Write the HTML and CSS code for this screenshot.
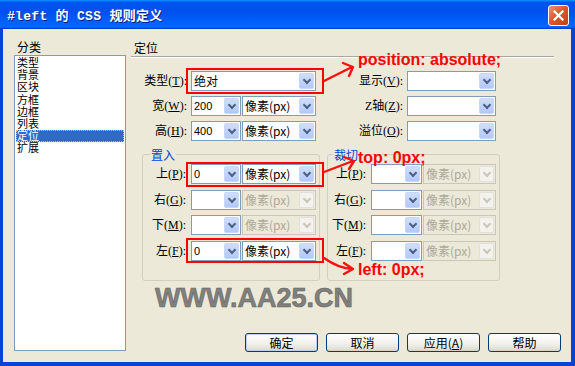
FILE: index.html
```html
<!DOCTYPE html>
<html lang="zh-CN">
<head>
    <meta charset="UTF-8">
    <meta name="viewport" content="width=device-width, initial-scale=1.0">
    <title>#left 的 CSS 规则定义</title>
    <link rel="stylesheet" href="styles.css">
</head>
<body>
<div class="window">
    <div class="titlebar">
        <span class="title">#left 的 CSS 规则定义</span>
        <button class="close-btn" title="关闭">
            <svg width="11" height="11" viewBox="0 0 11 11"><path d="M1.5 1.5 L9.5 9.5 M9.5 1.5 L1.5 9.5" stroke="#fff" stroke-width="2.2" stroke-linecap="square"/></svg>
        </button>
    </div>

    <div class="client">
        <div class="sidebar">
            <div class="caption">分类</div>
            <ul class="category-list">
                <li>类型</li>
                <li>背景</li>
                <li>区块</li>
                <li>方框</li>
                <li>边框</li>
                <li>列表</li>
                <li class="selected">定位</li>
                <li>扩展</li>
            </ul>
        </div>

        <div class="content">
            <div class="panel">
                <div class="panel-title">定位</div>

                <div class="top-fields">
                    <label class="field-label">类型(<u>T</u>):</label>
                    <div class="combo"><span class="combo-value">绝对</span><span class="combo-arrow"></span></div>
                    <label class="field-label">显示(<u>V</u>):</label>
                    <div class="combo"><span class="combo-value"></span><span class="combo-arrow"></span></div>

                    <label class="field-label">宽(<u>W</u>):</label>
                    <div class="pair">
                        <div class="combo num"><span class="combo-value number">200</span><span class="combo-arrow"></span></div>
                        <div class="combo unit"><span class="combo-value">像素(px)</span><span class="combo-arrow"></span></div>
                    </div>
                    <label class="field-label">Z轴(<u>Z</u>):</label>
                    <div class="combo"><span class="combo-value"></span><span class="combo-arrow"></span></div>

                    <label class="field-label">高(<u>H</u>):</label>
                    <div class="pair">
                        <div class="combo num"><span class="combo-value number">400</span><span class="combo-arrow"></span></div>
                        <div class="combo unit"><span class="combo-value">像素(px)</span><span class="combo-arrow"></span></div>
                    </div>
                    <label class="field-label">溢位(<u>O</u>):</label>
                    <div class="combo"><span class="combo-value"></span><span class="combo-arrow"></span></div>
                </div>

                <div class="groups">
                    <fieldset class="group placement">
                        <legend>置入</legend>
                        <div class="group-rows">
                            <label class="field-label">上(<u>P</u>):</label>
                            <div class="combo"><span class="combo-value number">0</span><span class="combo-arrow"></span></div>
                            <div class="combo"><span class="combo-value">像素(px)</span><span class="combo-arrow"></span></div>

                            <label class="field-label">右(<u>G</u>):</label>
                            <div class="combo"><span class="combo-value"></span><span class="combo-arrow"></span></div>
                            <div class="combo disabled"><span class="combo-value">像素(px)</span><span class="combo-arrow"></span></div>

                            <label class="field-label">下(<u>M</u>):</label>
                            <div class="combo"><span class="combo-value"></span><span class="combo-arrow"></span></div>
                            <div class="combo disabled"><span class="combo-value">像素(px)</span><span class="combo-arrow"></span></div>

                            <label class="field-label">左(<u>F</u>):</label>
                            <div class="combo"><span class="combo-value number">0</span><span class="combo-arrow"></span></div>
                            <div class="combo"><span class="combo-value">像素(px)</span><span class="combo-arrow"></span></div>
                        </div>
                    </fieldset>

                    <fieldset class="group clip">
                        <legend>裁切</legend>
                        <div class="group-rows">
                            <label class="field-label">上(<u>P</u>):</label>
                            <div class="combo"><span class="combo-value"></span><span class="combo-arrow"></span></div>
                            <div class="combo disabled"><span class="combo-value">像素(px)</span><span class="combo-arrow"></span></div>

                            <label class="field-label">右(<u>G</u>):</label>
                            <div class="combo"><span class="combo-value"></span><span class="combo-arrow"></span></div>
                            <div class="combo disabled"><span class="combo-value">像素(px)</span><span class="combo-arrow"></span></div>

                            <label class="field-label">下(<u>M</u>):</label>
                            <div class="combo"><span class="combo-value"></span><span class="combo-arrow"></span></div>
                            <div class="combo disabled"><span class="combo-value">像素(px)</span><span class="combo-arrow"></span></div>

                            <label class="field-label">左(<u>F</u>):</label>
                            <div class="combo"><span class="combo-value"></span><span class="combo-arrow"></span></div>
                            <div class="combo disabled"><span class="combo-value">像素(px)</span><span class="combo-arrow"></span></div>
                        </div>
                    </fieldset>
                </div>
            </div>

            <div class="footer">
                <button class="btn default">确定</button>
                <button class="btn">取消</button>
                <button class="btn">应用(<u>A</u>)</button>
                <button class="btn">帮助</button>
            </div>
        </div>
    </div>

    <!-- annotations drawn over the dialog -->
    <div class="annotations">
        <svg width="575" height="366" viewBox="0 0 575 366">
            <g fill="none" stroke="#ff0000" stroke-width="2">
                <rect x="187" y="69" width="136" height="24"/>
                <rect x="187" y="163" width="136" height="23"/>
                <rect x="187" y="239" width="136" height="23"/>
            </g>
            <g fill="none" stroke="#ff1010" stroke-width="2.4" stroke-linecap="round" stroke-linejoin="round">
                <path d="M324 81 L352 67 M343 63 L353 67 L349 76"/>
                <path d="M324 172 L353 161 M344 157 L354 161 L349 169"/>
                <path d="M324 258 Q338 268 352 269 M344 263 L353 269 L344 274"/>
            </g>
        </svg>
        <div class="note note-position">position: absolute;</div>
        <div class="note note-top">top: 0px;</div>
        <div class="note note-left">left: 0px;</div>
        <div class="watermark">WWW.AA25.CN</div>
    </div>
</div>
</body>
</html>
```

FILE: styles.css
```css
body {
    margin: 0;
    background: #fff;
}

.window {
    position: relative;
    width: 575px;
    height: 366px;
    box-sizing: border-box;
    display: flex;
    flex-direction: column;
    background: #0843d6;
    font-family: "Noto Sans CJK SC", "Noto Sans", sans-serif;
    font-size: 12px;
    color: #000;
    overflow: hidden;
}

/* title bar */
.titlebar {
    flex: none;
    height: 29px;
    display: flex;
    align-items: center;
    justify-content: space-between;
    padding: 0 6px 0 7px;
    background: linear-gradient(180deg, #0997ff, #0053ee 8%, #0050ee 40%, #0066ff 88%, #0066ff 93%, #005bff 95%, #003dd7 96%, #003dd7);
}
.title {
    color: #fff;
    font: bold 13px "Liberation Mono", "Noto Sans CJK SC", monospace;
    letter-spacing: 0.3px;
    text-shadow: 1px 1px 0 #0a1e8c;
    white-space: nowrap;
}
.close-btn {
    width: 21px;
    height: 21px;
    margin-top: 1px;
    padding: 0;
    display: flex;
    align-items: center;
    justify-content: center;
    border: 1px solid #fff;
    border-radius: 3px;
    background: linear-gradient(135deg, #f29273, #e0572f 45%, #c63d15);
}

/* client area */
.client {
    flex: 1;
    margin: 0 4px 4px 3px;
    padding: 10px 9px 10px 11px;
    display: flex;
    gap: 5px;
    background: #ece9d8;
    min-height: 0;
}

.sidebar {
    width: 112px;
    display: flex;
    flex-direction: column;
}
.caption {
    height: 16px;
    line-height: 16px;
    padding-left: 3px;
}
.category-list {
    flex: 1;
    margin: 0 0 1px;
    padding: 1px 0 0;
    list-style: none;
    background: #fff;
    border: 1px solid #7f9db9;
    font-family: "Liberation Serif", "Noto Sans CJK SC", serif;
    font-size: 11px;
}
.category-list li {
    height: 12.2px;
    line-height: 12.2px;
    margin: 0 1px;
    padding-left: 1px;
}
.category-list li.selected {
    background: #316ac5;
    color: #fff;
    outline: 1px dotted #e4c063;
    outline-offset: -1px;
}

.content {
    flex: 1;
    display: flex;
    flex-direction: column;
}
.panel {
    flex: 1;
    margin-right: 8px;
}
.panel-title {
    height: 17px;
    line-height: 17px;
    padding-left: 3px;
    border-bottom: 1px solid #aca899;
    box-shadow: 0 1px 0 #fff;
}

.top-fields {
    display: grid;
    grid-template-columns: 56px 125px 83px 89px;
    grid-auto-rows: 20px;
    column-gap: 4px;
    row-gap: 5px;
    margin-top: 14px;
}
.field-label {
    font-family: "Liberation Serif", "Noto Sans CJK SC", serif;
    text-align: right;
    line-height: 20px;
    white-space: nowrap;
}
.pair {
    display: flex;
    gap: 1px;
}
.pair .num {
    width: 50px;
}
.pair .unit {
    flex: 1;
}

/* combo box */
.combo {
    box-sizing: border-box;
    height: 20px;
    display: flex;
    align-items: center;
    border: 1px solid #7f9db9;
    background: #fff;
    min-width: 0;
}
.combo-value {
    flex: 1;
    padding-left: 2px;
    line-height: 18px;
    white-space: nowrap;
    overflow: hidden;
}
.combo-value.number {
    font-family: "Liberation Sans", Arial, sans-serif;
    font-size: 11px;
}
.combo-arrow {
    flex: none;
    width: 15px;
    height: 16px;
    margin-right: 1px;
    box-sizing: border-box;
    display: flex;
    align-items: center;
    justify-content: center;
    border: 1px solid #c6d6fc;
    border-radius: 2px;
    background: linear-gradient(#d0defd, #b3c8f7);
}
.combo-arrow::after {
    content: "";
    width: 4px;
    height: 4px;
    border-right: 2px solid #4d6185;
    border-bottom: 2px solid #4d6185;
    transform: translateY(-1px) rotate(45deg);
}
.combo.disabled {
    border-color: #c9c7ba;
    background: #ece9d8;
    color: #aca899;
}
.combo.disabled .combo-arrow {
    border-color: #e2e1d9;
    background: #f3f2ec;
}
.combo.disabled .combo-arrow::after {
    border-color: #c9c7ba;
}

/* group boxes */
.groups {
    display: flex;
    gap: 7px;
    margin: 7px 0 0 11px;
}
.group {
    box-sizing: border-box;
    margin: 0;
    min-width: 0;
    border: 1px solid #d0d0bf;
    border-radius: 3px;
}
.group legend {
    padding: 0 1px;
    line-height: 13px;
    color: #0046d5;
}
.placement {
    width: 178px;
    padding: 3px 3px 19px 7px;
}
.clip {
    width: 173px;
    padding: 3px 3px 19px 2px;
}
.clip legend {
    margin-left: 3px;
}
.group-rows {
    display: grid;
    grid-template-columns: 40px 50px 74px;
    grid-auto-rows: 20px;
    column-gap: 1px;
    row-gap: 5.6px;
}
.clip .group-rows {
    grid-template-columns: 40px 51px 73px;
}
.group-rows .field-label {
    padding-right: 4px;
}

/* buttons */
.footer {
    display: flex;
    justify-content: flex-end;
    gap: 8px;
    padding-right: 1px;
}
.btn {
    width: 73px;
    height: 19px;
    box-sizing: border-box;
    padding: 0;
    border: 1px solid #003c74;
    border-radius: 3px;
    background: linear-gradient(#ffffff, #f4f3ee 50%, #e3e0d5 88%, #d6d0c5);
    font: 12px/17px "Noto Sans CJK SC", sans-serif;
    color: #000;
}
.btn.default {
    box-shadow: inset 0 0 0 1px #b8d0f5;
}

/* annotations */
.annotations {
    position: absolute;
    inset: 0;
    pointer-events: none;
}
.annotations svg {
    position: absolute;
    left: 0;
    top: 0;
}
.note {
    position: absolute;
    left: 358px;
    font: bold 16px/16px "Liberation Sans", Arial, sans-serif;
    color: #ff0000;
    white-space: nowrap;
}
.note-position {
    top: 52px;
}
.note-top {
    top: 150px;
}
.note-left {
    top: 262px;
}
.watermark {
    position: absolute;
    left: 155px;
    top: 285px;
    font: bold 27px/27px "Liberation Sans", Arial, sans-serif;
    color: #80807c;
    -webkit-text-stroke: 0.6px #666663;
    white-space: nowrap;
}
```
